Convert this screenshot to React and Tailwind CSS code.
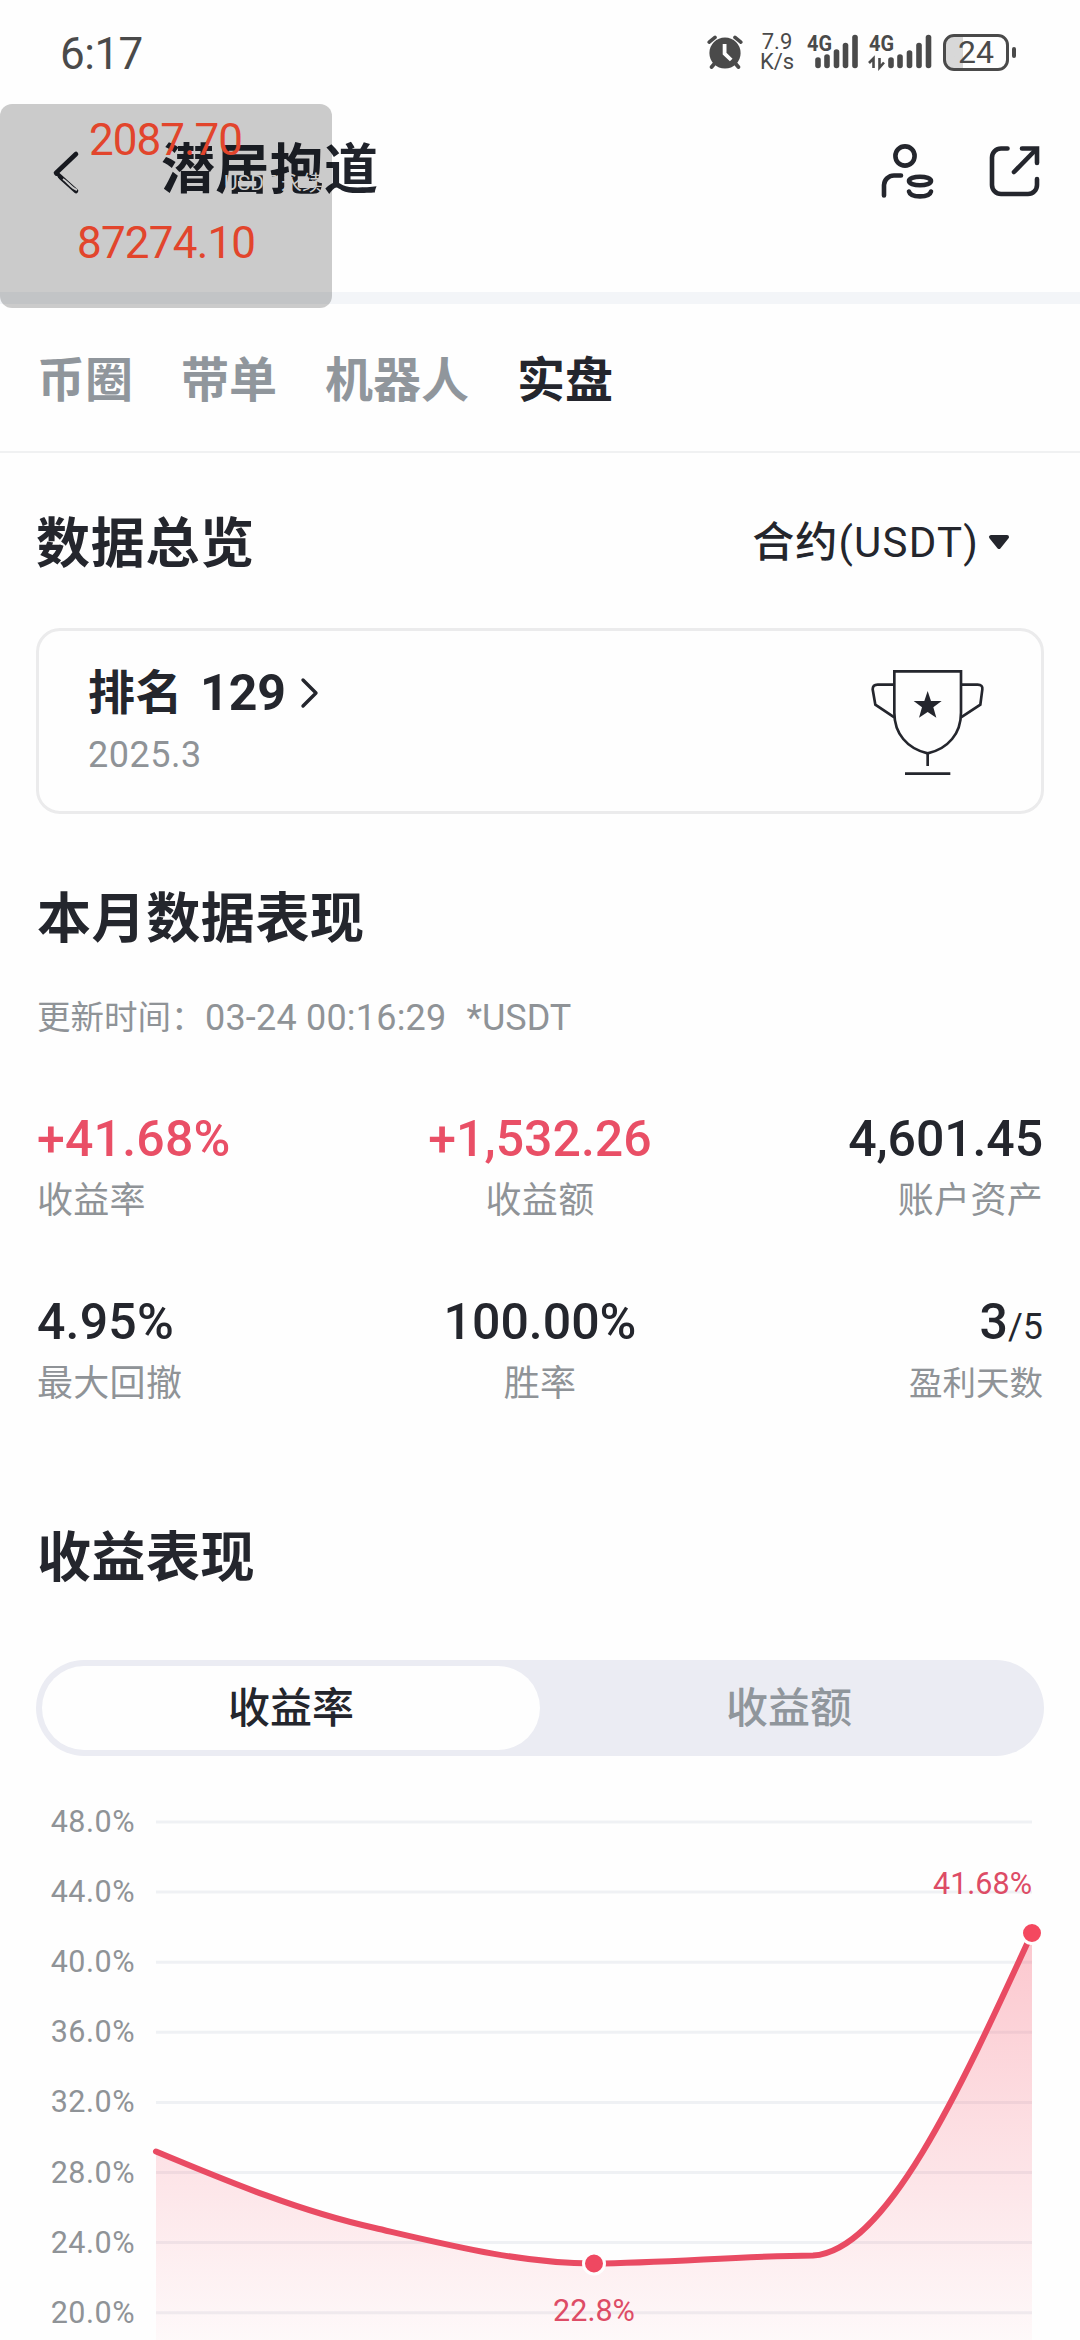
import React, { useMemo } from 'react';

const TABS = ['币圈', '带单', '机器人', '实盘'];

const STATS = [
  { label: '收益率', value: '+41.68%', align: 'items-start', color: 'text-[#e94f66]', tracking: 'tracking-[0.2px]' },
  { label: '收益额', value: '+1,532.26', align: 'items-center', color: 'text-[#e94f66]', tracking: 'tracking-normal' },
  { label: '账户资产', value: '4,601.45', align: 'items-end', color: 'text-[#24262d]', tracking: 'tracking-[-0.1px]' },
  { label: '最大回撤', value: '4.95%', align: 'items-start', color: 'text-[#24262d]', tracking: 'tracking-[0.2px]' },
  { label: '胜率', value: '100.00%', align: 'items-center', color: 'text-[#24262d]', tracking: 'tracking-normal' },
  { label: '盈利天数', value: '3', total: '/5', align: 'items-end', color: 'text-[#24262d]', tracking: 'tracking-normal' }
];

const CHART = {
  left: 156,
  right: 1032,
  top: 66,
  step: 70.1,
  ticks: [48, 44, 40, 36, 32, 28, 24, 20]
};

const AlarmIcon = () => (
  <svg width="36" height="34" viewBox="0 0 36 34" fill="none">
    <circle cx="18" cy="18" r="15.6" fill="#4a4a4a" />
    <path d="M2.2 7.2 8 2.4M33.8 7.2 28 2.4" stroke="#4a4a4a" strokeWidth="3.6" strokeLinecap="round" />
    <path d="M8 28 4.6 32M28 28l3.4 4" stroke="#4a4a4a" strokeWidth="3.8" strokeLinecap="round" />
    <path d="M17.6 9v9.6l6.6 6.4" stroke="#fefefe" strokeWidth="3.8" />
  </svg>
);

const SignalIcon = ({ arrows }) => (
  <svg className="overflow-visible" width="64" height="36" viewBox="0 0 64 36" fill="none">
    <text x="0" y="17" fontSize="22.5" fontWeight="700" fill="#4a4a4a" textLength="25" lengthAdjust="spacingAndGlyphs">4G</text>
    {arrows && <path d="M0 29l4.500-4.500v9.500M10.500 24v9.500l4.500-5" stroke="#4a4a4a" strokeWidth="2.600" />}
    <g stroke="#4a4a4a" strokeWidth="5.600" strokeLinecap="round">
      {(arrows
        ? [[22, 26], [31, 23], [40.5, 19], [50, 11.5], [59.5, 3.5]]
        : [[11, 26], [20, 23], [29.5, 18], [38.5, 11.5], [48, 3.5]]
      ).map(([x, y]) => (
        <path key={x} d={`M${x} ${y}V31.5`} />
      ))}
    </g>
  </svg>
);

const StatusBar = () => (
  <div className="flex h-[104px] shrink-0 items-center pl-[60px] pr-[64px] text-[#4a4a4a]">
    <span className="mt-[3px] text-[44px] leading-[52px] tracking-[-0.5px]">6:17</span>
    <div className="ml-auto flex h-9 items-center">
      <AlarmIcon />
      <div className="ml-[16px] flex w-[36px] flex-col text-center text-[22px] leading-[20px]">
        <span>7.9</span>
        <span>K/s</span>
      </div>
      <div className="ml-[12px] w-[52px]"><SignalIcon /></div>
      <div className="ml-[10px] w-[64px]"><SignalIcon arrows /></div>
      <div className="ml-[10px] flex h-[37px] w-[66px] items-center justify-center rounded-[11px] border-[3px] border-[#4a4a4a] bg-linear-to-r from-[#d8d8d8] from-28% to-transparent to-28% text-[32px] leading-none">
        24
      </div>
      <div className="ml-[3px] h-[11px] w-[4px] rounded-full bg-[#4a4a4a]" />
    </div>
  </div>
);

const Header = () => (
  <div className="flex h-[188px] shrink-0 items-start pl-[50px] pr-[37px]">
    <svg className="mt-[44px]" width="32" height="48" viewBox="0 0 32 48" fill="none">
      <path d="M26 6 6 25 26 43" stroke="#1d2027" strokeWidth="4.600" strokeLinecap="round" strokeLinejoin="round" />
    </svg>
    <h1 className="ml-[79px] mt-[33px] text-[54px] font-bold leading-[68px] tracking-[0.3px] text-[#20232b]">潜居抱道</h1>
    <div className="ml-auto mt-[38px] flex gap-[53px]">
      {/* person with coins */}
      <svg width="60" height="60" viewBox="0 0 60 60" fill="none" stroke="#24262d" strokeWidth="4.600" strokeLinecap="round">
        <circle cx="29" cy="14" r="9.600" />
        <path d="M8 53.500V43a10 10 0 0 1 10-9.500h7" />
        <ellipse cx="44" cy="39" rx="11" ry="4.300" />
        <path d="M33 49.500c1.500 6.500 20.500 6.500 22 0" />
      </svg>
      <svg width="54" height="60" viewBox="0 0 54 60" fill="none" stroke="#24262d" strokeWidth="4.600" strokeLinecap="round">
        <path d="M18.500 6.500H12A9 9 0 0 0 3 15.500V43a9 9 0 0 0 9 9H39a9 9 0 0 0 9-9V37" />
        <path d="M33 6.500H48V21" />
        <path d="M25 30 47 7.500" />
      </svg>
    </div>
  </div>
);

// Floating ticker that hovers over the header
const TickerOverlay = () => (
  <div className="absolute left-0 top-[104px] h-[204px] w-[332px] overflow-hidden rounded-[12px] bg-black/20 text-[44px] leading-[52px] text-[#e2452c]">
    <div className="ml-[89px] mt-[10px] tracking-[-1px]">2087.70</div>
    <div className="mr-[9px] h-[24px] pt-[7px] text-right text-[21px] leading-[20px] text-[#cbcbcb]">USDT 永续</div>
    <svg className="absolute left-[52px] top-[72px]" width="28" height="20" viewBox="0 0 28 20" fill="none" stroke="#cbcbcb" strokeWidth="2">
      <path d="M4 0c4 6 3 9 2 15M11 3c5 3 8 9 14 11M9 9l8 9" />
    </svg>
    <div className="ml-[77px] mt-[27px] tracking-[-0.8px]">87274.10</div>
  </div>
);

const RankCard = () => (
  <div className="mx-[36px] mt-[46px] flex h-[186px] shrink-0 items-center justify-between rounded-[24px] border-[3px] border-[#ebebec] pl-[49px] pr-[56px]">
    <div>
      <div className="flex items-center text-[48px] font-bold leading-[56px] text-[#24262d]">
        <span className="tracking-[0.5px] text-[47px]">排名</span>
        <span className="ml-[17px] text-[50px]">129</span>
        <svg className="ml-[14px]" width="20" height="34" viewBox="0 0 20 34" fill="none">
          <path d="M3 4l13 13L3 30" stroke="#24262d" strokeWidth="3.400" strokeLinecap="round" strokeLinejoin="round" />
        </svg>
      </div>
      <div className="mt-[12px] text-[36px] leading-[44px] tracking-[0.5px] text-[#8f9397]">2025.3</div>
    </div>
    <svg className="mt-[4px]" width="114" height="106" viewBox="0 0 342 318" fill="none" stroke="#24262d" strokeWidth="8">
      <path d="M70 4H270V128C270 190 232 236 170 250C108 236 70 190 70 128Z" />
      <path d="M70 44H20Q5 44 5 58L13 104L70 142M270 44H320Q336 44 334 58L328 104L270 142" />
      <path d="M170 248V288M102 311H238" />
      <path d="M170 63L180 93H212L187 112L196 143L170 126L144 143L153 112L128 93H160Z" fill="#24262d" stroke="none" />
    </svg>
  </div>
);

const StatItem = ({ stat }) => (
  <div className={`flex flex-col ${stat.align}`}>
    <div className={`h-[60px] text-[50px] font-medium leading-[60px] ${stat.color} ${stat.tracking}`}>
      {stat.value}
      {stat.total && <span className="text-[36px] font-normal">{stat.total}</span>}
    </div>
    <div className={`mt-[7px] h-[50px] leading-[50px] text-[#8f9397] ${stat.total ? 'text-[33.5px]' : 'text-[36px] tracking-[0.3px]'}`}>
      {stat.label}
    </div>
  </div>
);

const ProfitChart = () => {
  const gridLines = useMemo(
    () => CHART.ticks.map((tick, i) => ({ tick, y: CHART.top + i * CHART.step })),
    []
  );

  const line = 'M156 395.500C229 426 302 456 375 472C448 489 521 507.500 594 507.500C667 507 740 500 813 499.500C886 495 959 336 1032 177';

  return (
    <svg className="block shrink-0" width="1080" height="584" viewBox="0 0 1080 584" fill="none">
      <defs>
        <linearGradient id="profitFill" gradientUnits="userSpaceOnUse" x1="0" y1="177" x2="0" y2="627">
          <stop offset="0" stopColor="#f6465d" stopOpacity="0.3" />
          <stop offset="1" stopColor="#f6465d" stopOpacity="0" />
        </linearGradient>
      </defs>
      {gridLines.map(({ tick, y }) => (
        <g key={tick}>
          <path d={`M${CHART.left} ${y}H${CHART.right}`} stroke="#eff1f4" strokeWidth="3" />
          <text x="135" y={y + 10} textAnchor="end" fontSize="30.5" letterSpacing="0.5" fill="#8f9397">{tick}.0%</text>
        </g>
      ))}
      <path d={`${line}V627H156Z`} fill="url(#profitFill)" />
      <path d={line} stroke="#e94b63" strokeWidth="6" strokeLinecap="round" />
      <circle cx="594" cy="507.500" r="10.500" fill="#ef4861" stroke="#fefefe" strokeWidth="3" />
      <circle cx="1032" cy="177" r="10.500" fill="#f4485f" stroke="#fefefe" strokeWidth="3" />
      <text x="594" y="565" textAnchor="middle" fontSize="30.5" fill="#dd4c66">22.8%</text>
      <text x="1032" y="138" textAnchor="end" fontSize="30.5" fill="#dd4c66">41.68%</text>
    </svg>
  );
};

export default function App() {
  return (
    <div className="relative flex h-[2340px] w-[1080px] flex-col overflow-hidden bg-[#fefefe] font-[Roboto,'Noto_Sans_CJK_SC',sans-serif] text-[#24262d]">
      <StatusBar />
      <Header />
      <div className="h-[12px] shrink-0 bg-[#f3f5f8]" />

      <div className="flex h-[149px] shrink-0 items-center gap-[48px] border-b-2 border-[#f0f1f2] px-[37px] pt-[6px] text-[48px] font-bold leading-[60px]">
        {TABS.map((tab) => (
          <span key={tab} className={tab === '实盘' ? 'text-[#24262d]' : 'text-[#90969c]'}>{tab}</span>
        ))}
      </div>

      <div className="mt-[55px] flex h-[74px] shrink-0 items-center justify-between pl-[36px] pr-[69px]">
        <h2 className="text-[54px] font-bold leading-[70px] tracking-[0.7px]">数据总览</h2>
        <div className="flex items-center pb-[5px] text-[42px] font-medium leading-[50px] tracking-[1.2px]">
          合约<span className="font-normal">(USDT)</span>
          <svg className="ml-[8px]" width="24" height="18" viewBox="0 0 24 18">
            <path d="M4 3H20L12 13Z" fill="#24262d" stroke="#24262d" strokeWidth="4" strokeLinejoin="round" />
          </svg>
        </div>
      </div>

      <RankCard />

      <h2 className="mt-[71px] shrink-0 pl-[37px] text-[54px] font-bold leading-[70px] tracking-[0.6px]">本月数据表现</h2>
      <div className="mt-[38px] flex h-[50px] shrink-0 whitespace-pre pl-[37px] text-[33.5px] leading-[50px] text-[#8f9397]">
        <span className="w-[168px]">更新时间：</span>
        <span className="text-[36px] tracking-[0.2px]">03-24 00:16:29</span>
        <span className="ml-[20px] text-[36px]">*USDT</span>
      </div>

      <div className="mt-[66px] grid shrink-0 grid-cols-3 gap-y-[66px] px-[37px]">
        {STATS.map((stat) => (
          <StatItem key={stat.label} stat={stat} />
        ))}
      </div>

      <h2 className="mt-[115px] shrink-0 pl-[37px] text-[54px] font-bold leading-[70px] tracking-[0.5px]">收益表现</h2>

      <div className="mx-[36px] mt-[66px] flex h-[96px] shrink-0 rounded-full bg-[#ebecf3] p-[6px] text-[42px] font-medium">
        <div className="flex flex-1 items-center justify-center rounded-full bg-[#fefefe]">收益率</div>
        <div className="flex flex-1 items-center justify-center text-[#90969c]">收益额</div>
      </div>

      <ProfitChart />
      <TickerOverlay />
    </div>
  );
}
